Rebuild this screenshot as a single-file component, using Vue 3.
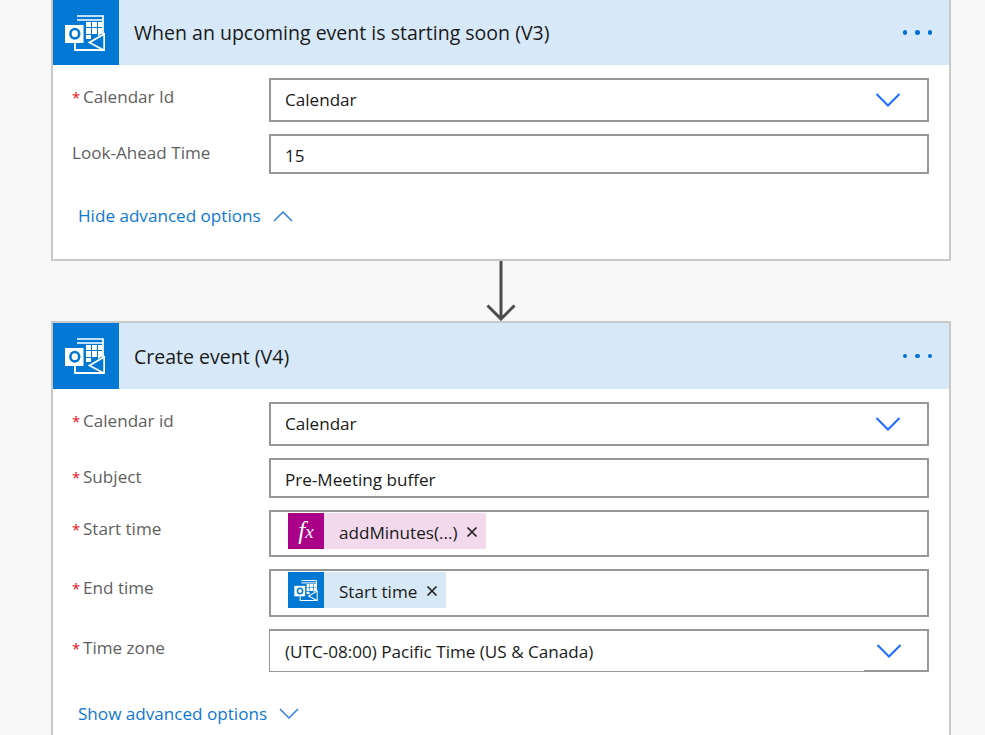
<template>
  <div class="page">
    <svg width="0" height="0" class="defs">
      <symbol id="outlook" viewBox="0 0 40 36">
        <path d="M12 1h26v18M12 5h26" fill="none" stroke="#fff" stroke-width="1.700" />
        <path d="M21 7h5v5h-5zM27 7h5v5h-5zM33 7h4.500v5H33zM21 13h5v6h-5zM27 13h5v6h-5zM21 20h5v4h-5zM33 13h4.500v5L33 21z" fill="#fff" />
        <path d="M10 28v7h29.200V19L24.500 27.500l14 7.500" fill="none" stroke="#fff" stroke-width="1.800" />
        <path d="M0 10h18.500v18H0z" fill="#fff" />
        <ellipse cx="9.800" cy="18.700" rx="4.400" ry="4.700" fill="none" stroke="#0078d4" stroke-width="2.600" />
      </symbol>
    </svg>

    <section class="card first">
      <header class="head">
        <div class="head-icon"><svg class="logo"><use href="#outlook" /></svg></div>
        <h2>When an upcoming event is starting soon (V3)</h2>
        <div class="dots"><i></i><i></i><i></i></div>
      </header>
      <div class="body">
        <div class="row">
          <label class="field-label"><span class="req">*</span>Calendar Id</label>
          <div class="input select">
            <span>Calendar</span>
            <svg class="chevron" width="26" height="16" viewBox="0 0 26 16"><path d="M1.500 2l11.500 11.500L24.500 2" /></svg>
          </div>
        </div>
        <div class="row">
          <label class="field-label">Look-Ahead Time</label>
          <div class="input"><span>15</span></div>
        </div>
        <a class="advanced">
          Hide advanced options
          <svg class="chevron small" width="22" height="14" viewBox="0 0 22 14"><path d="M2 12L11 3l9 9" /></svg>
        </a>
      </div>
    </section>

    <div class="arrow">
      <svg width="32" height="60" viewBox="0 0 32 60">
        <path d="M16 0v58M2.500 44.500L16 58l13.500-13.500" fill="none" stroke="#4c4c4c" stroke-width="3" />
      </svg>
    </div>

    <section class="card second">
      <header class="head">
        <div class="head-icon"><svg class="logo"><use href="#outlook" /></svg></div>
        <h2>Create event (V4)</h2>
        <div class="dots"><i></i><i></i><i></i></div>
      </header>
      <div class="body">
        <div class="row">
          <label class="field-label"><span class="req">*</span>Calendar id</label>
          <div class="input select">
            <span>Calendar</span>
            <svg class="chevron" width="26" height="16" viewBox="0 0 26 16"><path d="M1.500 2l11.500 11.500L24.500 2" /></svg>
          </div>
        </div>
        <div class="row">
          <label class="field-label"><span class="req">*</span>Subject</label>
          <div class="input"><span>Pre-Meeting buffer</span></div>
        </div>
        <div class="row">
          <label class="field-label"><span class="req">*</span>Start time</label>
          <div class="input tokens">
            <div class="token pink">
              <div class="token-icon fx">f<sub>x</sub></div>
              <span class="token-text">addMinutes(...)</span>
              <svg class="close" width="12" height="12" viewBox="0 0 12 12"><path d="M1.500 1.500l9 9M10.500 1.500l-9 9" /></svg>
            </div>
          </div>
        </div>
        <div class="row">
          <label class="field-label"><span class="req">*</span>End time</label>
          <div class="input tokens end">
            <div class="token blue">
              <div class="token-icon"><svg class="mini-logo"><use href="#outlook" /></svg></div>
              <span class="token-text">Start time</span>
              <svg class="close" width="12" height="12" viewBox="0 0 12 12"><path d="M1.500 1.500l9 9M10.500 1.500l-9 9" /></svg>
            </div>
          </div>
        </div>
        <div class="row">
          <label class="field-label"><span class="req">*</span>Time zone</label>
          <div class="timezone">
            <span class="tz-text">(UTC-08:00) Pacific Time (US &amp; Canada)</span>
            <div class="tz-btn">
              <svg class="chevron" width="26" height="16" viewBox="0 0 26 16"><path d="M1.500 2l11.500 11.500L24.500 2" /></svg>
            </div>
          </div>
        </div>
        <a class="advanced">
          Show advanced options
          <svg class="chevron small" width="22" height="14" viewBox="0 0 22 14"><path d="M2 2l9 9 9-9" /></svg>
        </a>
      </div>
    </section>
  </div>
</template>

<script setup>
</script>

<style>
html, body {
  margin: 0;
  height: 100%;
  overflow: hidden;
  background: #f8f8f8;
}
</style>

<style scoped>
.page {
  width: 900px;
  margin-left: 51px;
  font-family: "Open Sans", "Noto Sans", sans-serif;
  font-size: 17.100px;
  color: #1a1a1a;
}

.defs {
  position: absolute;
}

.card {
  background: #fff;
  border: 2px solid #c8c8c8;
  box-sizing: border-box;
}

.first {
  border-top: 0;
  height: 261px;
}

.first .head {
  height: 65px;
}

.second {
  height: 420px;
}

.head {
  height: 66px;
  display: flex;
  align-items: center;
  background: #d7e9f8;
}

.head-icon {
  width: 66px;
  height: 100%;
  flex: none;
  display: flex;
  align-items: center;
  justify-content: center;
  padding-right: 2px;
  box-sizing: border-box;
  background: #0078d4;
}

.logo {
  width: 40px;
  height: 36px;
}

.head h2 {
  flex: 1;
  margin: 0 0 0 15px;
  font-size: 19.550px;
  font-weight: 400;
}

.dots {
  display: flex;
  gap: 8px;
  margin-right: 17px;
}

.dots i {
  width: 4.500px;
  height: 4.500px;
  border-radius: 50%;
  background: #0072d6;
}

.body {
  padding: 13px 20px 0 19px;
}

.row {
  display: flex;
  margin-bottom: 12px;
}

.field-label {
  width: 197px;
  flex: none;
  padding-top: 7px;
  line-height: 24px;
  color: #5f5f5f;
}

.req {
  display: inline-block;
  width: 11px;
  font-size: 15px;
  color: #e81123;
}

.input {
  flex: 1;
  box-sizing: border-box;
  height: 40px;
  display: flex;
  align-items: center;
  justify-content: space-between;
  padding: 2px 14px 0;
  border: 2px solid #979797;
}

.select {
  height: 44px;
  padding: 0 26px 2px 14px;
}

.chevron {
  display: block;
}

.chevron path {
  fill: none;
  stroke: #1a6eff;
  stroke-width: 2;
}

.select .chevron {
  margin-top: 2px;
}

.chevron.small path {
  stroke: #2f7fe8;
  stroke-width: 1.500;
}

.advanced {
  display: flex;
  align-items: center;
  gap: 11px;
  margin: 30px 0 0 6px;
  line-height: 24px;
  color: #0f78d4;
}

.tokens {
  height: 47px;
  padding: 1px 17px 0;
  justify-content: flex-start;
  align-items: flex-start;
}

.tokens.end {
  height: 48px;
}

.token {
  height: 36px;
  display: flex;
  align-items: center;
}

.pink {
  background: #f2d9ec;
}

.blue {
  background: #d7e8f7;
}

.token-icon {
  width: 36px;
  height: 36px;
  display: flex;
  align-items: center;
  justify-content: center;
  background: #0078d4;
}

.token-icon.fx {
  background: #aa0088;
  color: #fff;
  font-family: "Liberation Serif", serif;
  font-style: italic;
  font-size: 25px;
}

.token-icon.fx sub {
  font-size: 19px;
  line-height: 1;
  vertical-align: -1px;
}

.mini-logo {
  width: 24px;
  height: 21px;
}

.token-text {
  margin: 2px 0 0 15px;
}

.close {
  margin: 2px 8px 0 9px;
}

.close path {
  fill: none;
  stroke: #222;
  stroke-width: 1.700;
}

.timezone {
  flex: 1;
  box-sizing: border-box;
  height: 43px;
  display: flex;
  border: solid #979797;
  border-width: 2px 2px 0 1px;
}

.tz-text {
  flex: 1;
  display: flex;
  align-items: center;
  padding-left: 15px;
  border-bottom: 1px solid #979797;
}

.tz-btn {
  width: 63px;
  display: flex;
  align-items: center;
  padding-left: 12px;
  box-sizing: border-box;
  border-bottom: 2px solid #979797;
}

.arrow {
  height: 60px;
  display: flex;
  justify-content: center;
}

.arrow svg {
  display: block;
}
</style>
